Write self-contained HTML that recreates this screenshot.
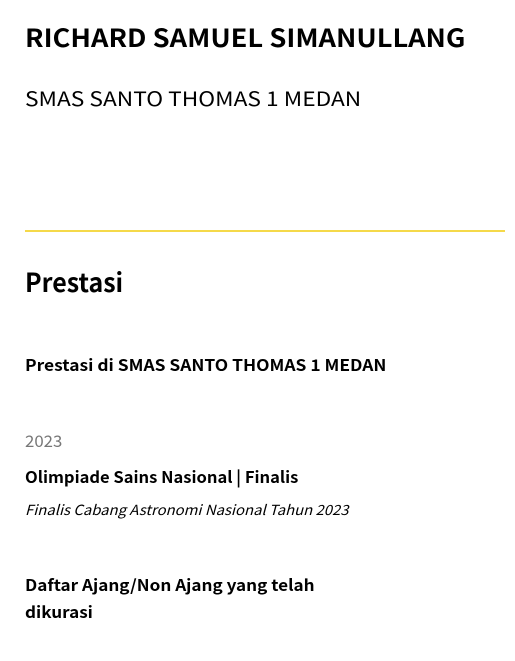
<!DOCTYPE html>
<html><head><meta charset="utf-8"><style>
html,body{margin:0;padding:0;background:#fff;width:515px;height:661px;overflow:hidden}
body{font-family:"Noto Sans CJK SC","Liberation Sans",sans-serif;color:#000;position:relative}
div{position:absolute;left:25px;white-space:nowrap;line-height:1;transform-origin:0 0}
.t{top:25px;font-size:25px;font-weight:700;transform:scaleX(1.089)}
.s{top:88px;font-size:20px;transform:scaleX(1.136)}
.hr{top:230px;width:480px;height:2px;background:#f5d94a}
.p{top:269px;font-size:26px;font-weight:700;transform:scaleX(0.96)}
.b{font-size:16px;font-weight:600}
.g{top:432px;font-size:16px;color:#777;transform:scaleX(1.05)}
.i{top:503px;font-size:14px;font-style:italic;transform:scaleX(1.062)}
</style></head><body>
<div class="t">RICHARD SAMUEL SIMANULLANG</div>
<div class="s">SMAS SANTO THOMAS 1 MEDAN</div>
<div class="hr"></div>
<div class="p">Prestasi</div>
<div class="b" style="top:356px;transform:scaleX(1.087)">Prestasi di SMAS SANTO THOMAS 1 MEDAN</div>
<div class="g">2023</div>
<div class="b" style="top:468px;transform:scaleX(1.034)">Olimpiade Sains Nasional | Finalis</div>
<div class="i">Finalis Cabang Astronomi Nasional Tahun 2023</div>
<div class="b" style="top:571px;line-height:27px;transform:scaleX(1.07)">Daftar Ajang/Non Ajang yang telah<br>dikurasi</div>
</body></html>
